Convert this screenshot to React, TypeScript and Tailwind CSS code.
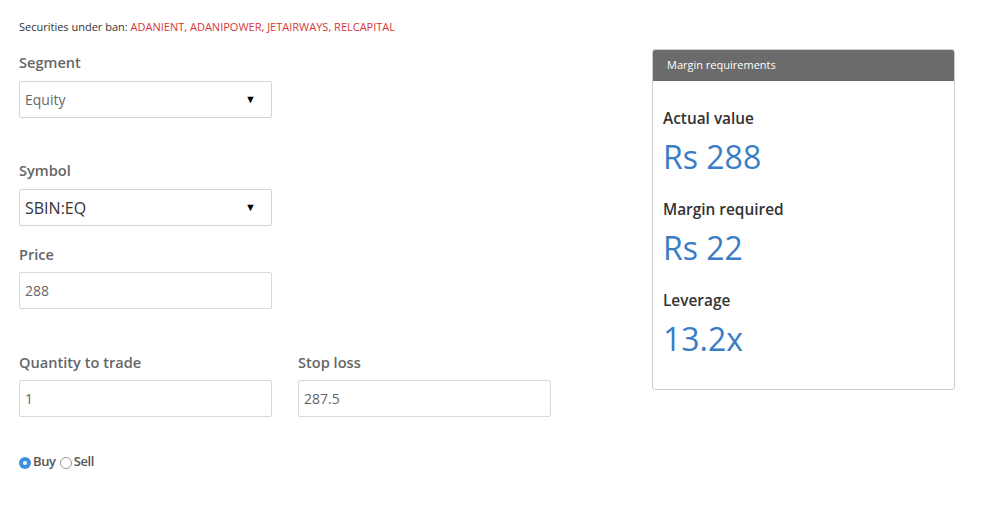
import React from "react";

const Label = ({ children }: { children: React.ReactNode }) => (
  <div className="text-[14.6px] leading-[20px] font-semibold text-[#666]">{children}</div>
);

const SelectBox = ({ value, big }: { value: string; big?: boolean }) => (
  <div className="w-[253px] h-[37px] border border-[#d4d4d4] rounded-[2px] flex items-center justify-between pl-[5px] pr-[15px] bg-white">
    <span className={big ? "text-[16px] text-[#333]" : "text-[14px] text-[#666]"}>{value}</span>
    <span className="text-[11px] text-black">▼</span>
  </div>
);

const InputBox = ({ value }: { value: string }) => (
  <div className="w-[253px] h-[37px] border border-[#d9d9d9] rounded-[2px] flex items-center pl-[5px] text-[14px] text-[#666]">
    {value}
  </div>
);

const Stat = ({ label, value }: { label: string; value: string }) => (
  <div className="flex flex-col">
    <div className="text-[15.4px] leading-[20px] font-semibold text-[#333]">{label}</div>
    <div className="mt-[10px] text-[32px] leading-[36px] text-[#3b7dc4]">{value}</div>
  </div>
);

const App = () => {
  return (
    <div className="w-[995px] h-[507px] bg-white flex pl-[19px] pt-[19px]" style={{ fontFamily: '"Open Sans", "Noto Sans", sans-serif' }}>
      <div className="w-[633px] flex flex-col">
        <div className="text-[11px] leading-[16px] text-[#333]">
          Securities under ban: <span className="text-[#d6363a]">ADANIENT, ADANIPOWER, JETAIRWAYS, RELCAPITAL</span>
        </div>
        <div className="mt-[17px]">
          <Label>Segment</Label>
        </div>
        <div className="mt-[9px]">
          <SelectBox value="Equity" />
        </div>
        <div className="mt-[42px]">
          <Label>Symbol</Label>
        </div>
        <div className="mt-[9px]">
          <SelectBox value="SBIN:EQ" big />
        </div>
        <div className="mt-[18px]">
          <Label>Price</Label>
        </div>
        <div className="mt-[8px]">
          <InputBox value="288" />
        </div>
        <div className="mt-[43px] flex gap-[26px]">
          <div className="flex flex-col gap-[8px]">
            <Label>Quantity to trade</Label>
            <InputBox value="1" />
          </div>
          <div className="flex flex-col gap-[8px]">
            <Label>Stop loss</Label>
            <InputBox value="287.5" />
          </div>
        </div>
        <div className="mt-[38px] flex items-center h-[16px] text-[13px] font-semibold text-[#555] tracking-[-0.03em]">
          <span className="w-[12px] h-[12px] rounded-full bg-[#3d8fe6] flex items-center justify-center">
            <span className="w-[4px] h-[4px] rounded-full bg-white" />
          </span>
          <span className="ml-[2px] -mt-[3px]">Buy</span>
          <span className="ml-[4px] w-[12px] h-[12px] rounded-full border border-[#999] bg-white" />
          <span className="ml-[2px] -mt-[3px]">Sell</span>
        </div>
      </div>
      <div className="mt-[30px] w-[303px] h-[341px] border border-[#ccc] rounded-[3px] flex flex-col self-start overflow-hidden">
        <div className="h-[31px] bg-[#6b6b6b] flex items-center pl-[14px] text-[11px] text-white">
          Margin requirements
        </div>
        <div className="pl-[10px] pt-[28px] flex flex-col gap-[25px]">
          <Stat label="Actual value" value="Rs 288" />
          <Stat label="Margin required" value="Rs 22" />
          <Stat label="Leverage" value="13.2x" />
        </div>
      </div>
    </div>
  );
};

export default App;
